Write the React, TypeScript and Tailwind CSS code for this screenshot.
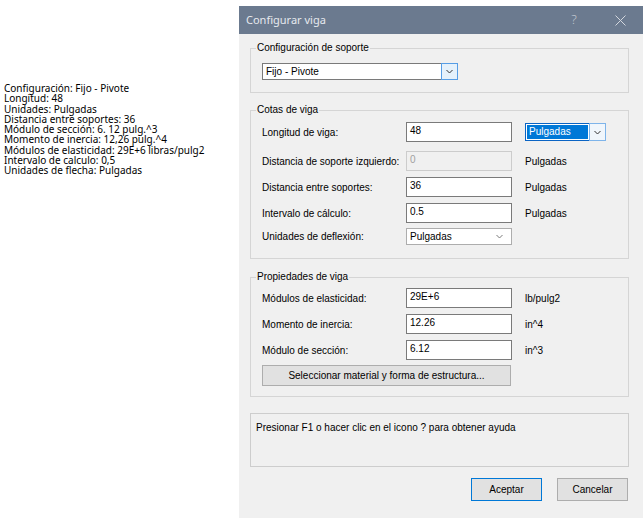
import React from "react";

const summary = [
  "Configuración: Fijo - Pivote",
  "Longitud: 48",
  "Unidades: Pulgadas",
  "Distancia entre soportes: 36",
  "Módulo de sección: 6. 12 pulg.^3",
  "Momento de inercia: 12,26 pulg.^4",
  "Módulos de elasticidad: 29E+6 libras/pulg2",
  "Intervalo de calculo: 0,5",
  "Unidades de flecha: Pulgadas",
];

function Chevron({ color = "#333333" }: { color?: string }) {
  return (
    <svg width="7" height="5" viewBox="0 0 7 5" fill="none">
      <path d="M0.5 1 L3.5 4 L6.5 1" stroke={color} strokeWidth="1" />
    </svg>
  );
}

function TextBox({ value, disabled }: { value: string; disabled?: boolean }) {
  return (
    <div
      className={
        disabled
          ? "h-[20px] w-[106px] border border-[#cccccc] bg-[#f0f0f0] pl-[3px] pt-[2px] leading-[12px] text-[#a0a0a0]"
          : "h-[20px] w-[106px] border border-[#7a7a7a] bg-white pl-[3px] pt-[2px] leading-[12px] text-black"
      }
    >
      {value}
    </div>
  );
}

function Row({
  label,
  children,
  unit,
  className = "",
}: {
  label: string;
  children: React.ReactNode;
  unit?: React.ReactNode;
  className?: string;
}) {
  return (
    <div className={"flex items-center " + className}>
      <div className="w-[144px] shrink-0">{label}</div>
      {children}
      {unit && <div className="ml-[13px]">{unit}</div>}
    </div>
  );
}

function Group({
  title,
  children,
  className = "",
}: {
  title: string;
  children: React.ReactNode;
  className?: string;
}) {
  return (
    <fieldset className={"border border-[#d5d5d5] " + className}>
      <legend className="ml-[5px] px-[1px] leading-[14px]">{title}</legend>
      {children}
    </fieldset>
  );
}

export default function App() {
  return (
    <div className="flex h-[518px] w-[643px] overflow-hidden bg-white">
      <div className="w-[239px] shrink-0 pl-[4px] pt-[83px] font-['Noto_Sans',sans-serif] text-[10px] leading-[10.3px] text-black">
        {summary.map((line) => (
          <div key={line} className="whitespace-nowrap">
            {line}
          </div>
        ))}
      </div>

      <div className="mt-[6px] flex h-[512px] flex-1 flex-col bg-[#f0f0f0]">
        <div className="flex h-[28px] shrink-0 items-center bg-[#6b7a8f] pl-[7px]">
          <span className="flex-1 font-['Noto_Sans',sans-serif] text-[11px] text-[#e6e9ee]">
            Configurar viga
          </span>
          <div className="flex h-full w-[46px] items-center justify-center font-['Noto_Sans',sans-serif] text-[13px] font-light text-[#c3c9d2]">
            ?
          </div>
          <div className="flex h-full w-[46px] items-center justify-center">
            <svg width="11" height="11" viewBox="0 0 11 11" fill="none">
              <path d="M0.5 0.5 L10.5 10.5 M10.5 0.5 L0.5 10.5" stroke="#d3d7de" strokeWidth="1" />
            </svg>
          </div>
        </div>

        <div className="flex flex-1 flex-col pl-[11px] pr-[14px] pt-[7px] font-['Liberation_Sans',Arial,sans-serif] text-[10px] text-black">
          <Group title="Configuración de soporte">
            <div className="pb-[12px] pl-[11px] pt-[8px]">
              <div className="flex h-[17px] w-[196px] border border-[#7a7a7a] bg-white">
                <div className="flex-1 pl-[3px] leading-[15px]">Fijo - Pivote</div>
                <div className="-my-px -mr-px flex w-[17px] items-center justify-center border border-[#569de5] bg-[#e5f1fb]">
                  <Chevron />
                </div>
              </div>
            </div>
          </Group>

          <Group title="Cotas de viga" className="mt-[10px]">
            <div className="pb-[13px] pl-[11px] pt-[5px]">
              <Row
                label="Longitud de viga:"
                unit={
                  <div className="flex h-[18px] w-[81px] border border-[#0a64c4] bg-white">
                    <div className="m-px flex-1 bg-[#0078d7] pl-[2px] leading-[14px] text-white">
                      Pulgadas
                    </div>
                    <div className="-my-px -mr-px flex w-[17px] items-center justify-center border border-[#7eb4ea] bg-[#f0f6fc]">
                      <Chevron />
                    </div>
                  </div>
                }
              >
                <TextBox value="48" />
              </Row>
              <Row label="Distancia de soporte izquierdo:" unit="Pulgadas" className="mt-[9px]">
                <TextBox value="0" disabled />
              </Row>
              <Row label="Distancia entre soportes:" unit="Pulgadas" className="mt-[6px]">
                <TextBox value="36" />
              </Row>
              <Row label="Intervalo de cálculo:" unit="Pulgadas" className="mt-[6px]">
                <TextBox value="0.5" />
              </Row>
              <Row label="Unidades de deflexión:" className="mt-[5px]">
                <div className="flex h-[17px] w-[106px] items-center border border-[#adadad] bg-white pl-[3px] pr-[8px]">
                  <span className="flex-1">Pulgadas</span>
                  <Chevron color="#7a7a7a" />
                </div>
              </Row>
            </div>
          </Group>

          <Group title="Propiedades de viga" className="mt-[11px]">
            <div className="pb-[10px] pl-[11px] pt-[4px]">
              <Row label="Módulos de elasticidad:" unit="lb/pulg2">
                <TextBox value="29E+6" />
              </Row>
              <Row label="Momento de inercia:" unit="in^4" className="mt-[6px]">
                <TextBox value="12.26" />
              </Row>
              <Row label="Módulo de sección:" unit="in^3" className="mt-[6px]">
                <TextBox value="6.12" />
              </Row>
              <button className="mt-[5px] flex h-[21px] w-[249px] items-center justify-center border border-[#adadad] bg-[#e1e1e1]">
                Seleccionar material y forma de estructura...
              </button>
            </div>
          </Group>

          <div className="mt-[16px] h-[54px] border border-[#cdcdcd] pl-[5px] pt-[6px]">
            Presionar F1 o hacer clic en el icono ? para obtener ayuda
          </div>

          <div className="mt-[11px] flex justify-end gap-[15px] pr-px">
            <button className="flex h-[23px] w-[71px] items-center justify-center border border-[#0078d7] bg-[#e1e1e1]">
              Aceptar
            </button>
            <button className="flex h-[23px] w-[71px] items-center justify-center border border-[#adadad] bg-[#e1e1e1]">
              Cancelar
            </button>
          </div>
        </div>
      </div>
    </div>
  );
}
